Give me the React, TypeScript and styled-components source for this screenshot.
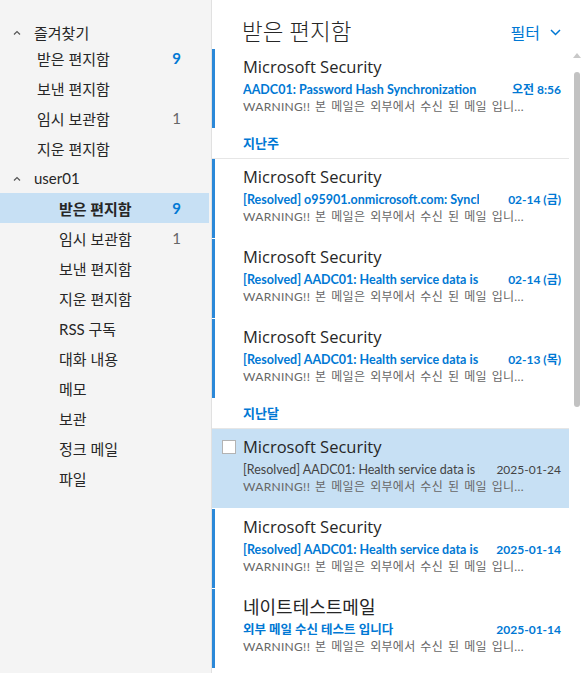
import styled, { createGlobalStyle } from "styled-components";

const GlobalStyle = createGlobalStyle`
    html, body {
        margin: 0;
        padding: 0;
        height: 100%;
        overflow: hidden;
        background: #ffffff;
    }
    body {
        font-family: "Open Sans", "Noto Sans CJK KR", sans-serif;
        color: #333333;
    }
    * { box-sizing: border-box; }
`;

const BLUE = "#0078d4";
const SMALL_FONT = `"Lato", "Noto Sans CJK KR", sans-serif`;
const hasHangul = (s: string) => /[가-힣]/.test(s);

type Folder = { label: string; count?: number; unread?: boolean; level: 0 | 1 | 2; selected?: boolean };

const folders: Folder[] = [
    { label: "즐겨찾기", level: 0 },
    { label: "받은 편지함", level: 1, count: 9, unread: true },
    { label: "보낸 편지함", level: 1 },
    { label: "임시 보관함", level: 1, count: 1 },
    { label: "지운 편지함", level: 1 },
    { label: "user01", level: 0 },
    { label: "받은 편지함", level: 2, count: 9, unread: true, selected: true },
    { label: "임시 보관함", level: 2, count: 1 },
    { label: "보낸 편지함", level: 2 },
    { label: "지운 편지함", level: 2 },
    { label: "RSS 구독", level: 2 },
    { label: "대화 내용", level: 2 },
    { label: "메모", level: 2 },
    { label: "보관", level: 2 },
    { label: "정크 메일", level: 2 },
    { label: "파일", level: 2 },
];

type Message = { from: string; subject: string; date: string; unread?: boolean; selected?: boolean };
type Group = { title?: string; items: Message[] };

const preview = "WARNING!! 본 메일은 외부에서 수신 된 메일 입니...";

const groups: Group[] = [
    { items: [{ from: "Microsoft Security", subject: "AADC01: Password Hash Synchronization", date: "오전 8:56", unread: true }] },
    {
        title: "지난주",
        items: [
            { from: "Microsoft Security", subject: "[Resolved] o95901.onmicrosoft.com: Synchronization", date: "02-14 (금)", unread: true },
            { from: "Microsoft Security", subject: "[Resolved] AADC01: Health service data is not up to date", date: "02-14 (금)", unread: true },
            { from: "Microsoft Security", subject: "[Resolved] AADC01: Health service data is not up to date", date: "02-13 (목)", unread: true },
        ],
    },
    {
        title: "지난달",
        items: [
            { from: "Microsoft Security", subject: "[Resolved] AADC01: Health service data is not up to date", date: "2025-01-24", selected: true },
            { from: "Microsoft Security", subject: "[Resolved] AADC01: Health service data is not up to date", date: "2025-01-14", unread: true },
            { from: "네이트테스트메일", subject: "외부 메일 수신 테스트 입니다", date: "2025-01-14", unread: true },
        ],
    },
];

const Shell = styled.div`
    display: flex;
    height: 100vh;
    overflow: hidden;
`;

const Sidebar = styled.nav`
    width: 212px;
    flex-shrink: 0;
    background: #f4f4f4;
    border-right: 1px solid #e1e1e1;
    padding-top: 21px;
    font-family: ${SMALL_FONT};
`;

const NavRow = styled.div<{ $level: number; $selected?: boolean; $first?: boolean }>`
    display: flex;
    align-items: center;
    height: ${({ $first }) => ($first ? 22 : 30)}px;
    margin-right: 2px;
    padding-left: ${({ $level }) => ($level === 0 ? 13 : $level === 1 ? 37 : 59)}px;
    padding-right: 28px;
    font-size: 15px;
    color: #262626;
    font-weight: ${({ $selected }) => ($selected ? 700 : 400)};
    background: ${({ $selected }) => ($selected ? "#c7e0f4" : "transparent")};
`;

const Caret = styled.svg`
    width: 8px;
    height: 5px;
    margin-right: 13px;
    flex-shrink: 0;
`;

const Count = styled.span<{ $unread?: boolean }>`
    margin-left: auto;
    font-size: 15px;
    font-weight: ${({ $unread }) => ($unread ? 700 : 400)};
    color: ${({ $unread }) => ($unread ? BLUE : "#666666")};
`;

const Main = styled.main`
    flex: 1;
    display: flex;
    flex-direction: column;
    min-width: 0;
`;

const ListHeader = styled.header`
    height: 49px;
    flex-shrink: 0;
    display: flex;
    align-items: center;
    justify-content: space-between;
    padding: 11px 22px 0 30px;
`;

const Title = styled.h1`
    margin: 0;
    font-size: 22.5px;
    font-weight: 300;
    color: #262626;
`;

const FilterButton = styled.button`
    display: flex;
    align-items: center;
    gap: 10px;
    border: none;
    background: none;
    padding: 0;
    margin-top: 4px;
    font-family: inherit;
    font-size: 16px;
    color: ${BLUE};
`;

const ListBody = styled.div`
    flex: 1;
    display: flex;
    min-height: 0;
`;

const ListColumn = styled.div`
    width: 357px;
    flex-shrink: 0;
`;

const GroupHeader = styled.div`
    height: 30px;
    line-height: 29px;
    padding-left: 31px;
    border-bottom: 1px solid #e6e6e6;
    font-size: 13px;
    font-weight: 700;
    color: ${BLUE};
`;

const Item = styled.div<{ $unread?: boolean; $selected?: boolean }>`
    display: flex;
    height: 79px;
    margin-bottom: 1px;
    border-left: 3px solid ${({ $unread }) => ($unread ? "#2b88d8" : "transparent")};
    background: ${({ $selected }) => ($selected ? "#c7e0f4" : "transparent")};
`;

const Gutter = styled.div`
    width: 28px;
    flex-shrink: 0;
    padding: 11px 0 0 7px;
`;

const CheckBox = styled.div`
    width: 14px;
    height: 14px;
    background: #ffffff;
    border: 1px solid #b3b3b3;
`;

const ItemBody = styled.div`
    flex: 1;
    min-width: 0;
    padding: 7px 8px 0 0;
`;

const Sender = styled.div<{ $cjk?: boolean }>`
    font-size: ${({ $cjk }) => ($cjk ? 18 : 16.5)}px;
    line-height: 22px;
    color: #262626;
    white-space: nowrap;
`;

const SubjectRow = styled.div<{ $unread?: boolean }>`
    display: flex;
    align-items: baseline;
    margin-top: 3px;
    font-family: ${SMALL_FONT};
    font-size: 12px;
    line-height: 17px;
    font-weight: ${({ $unread }) => ($unread ? 700 : 400)};
    color: ${({ $unread }) => ($unread ? BLUE : "#444444")};
`;

const Subject = styled.span`
    width: 236px;
    font-size: 12.5px;
    overflow: hidden;
    white-space: nowrap;
`;

const DateText = styled.span`
    margin-left: auto;
    white-space: nowrap;
`;

const Preview = styled.div`
    font-family: ${SMALL_FONT};
    font-size: 12px;
    line-height: 17px;
    word-spacing: 1.5px;
    letter-spacing: 0.3px;
    color: #666666;
    white-space: nowrap;
`;

const ScrollTrack = styled.div`
    width: 14px;
    display: flex;
    flex-direction: column;
    align-items: center;
    padding-top: 4px;
`;

const ScrollArrow = styled.svg`
    width: 8px;
    height: 5px;
    margin-left: 1px;
`;

const ScrollThumb = styled.div`
    width: 6px;
    height: 335px;
    margin-top: 14px;
    margin-left: 1px;
    border-radius: 3px;
    background: #c2c2c2;
`;

const App = () => (
    <>
        <GlobalStyle />
        <Shell>
            <Sidebar>
                {folders.map((f, i) => (
                    <NavRow key={i} $level={f.level} $selected={f.selected} $first={i === 0}>
                        {f.level === 0 && (
                            <Caret viewBox="0 0 8 5">
                                <polyline points="1,4.5 4,1.5 7,4.5" fill="none" stroke="#555" strokeWidth="1.2" />
                            </Caret>
                        )}
                        <span>{f.label}</span>
                        {f.count !== undefined && <Count $unread={f.unread}>{f.count}</Count>}
                    </NavRow>
                ))}
            </Sidebar>
            <Main>
                <ListHeader>
                    <Title>받은 편지함</Title>
                    <FilterButton>
                        필터
                        <svg width="11" height="7" viewBox="0 0 11 7">
                            <polyline points="1,1 5.5,5.5 10,1" fill="none" stroke={BLUE} strokeWidth="1.5" />
                        </svg>
                    </FilterButton>
                </ListHeader>
                <ListBody>
                    <ListColumn>
                        {groups.map((g, gi) => (
                            <div key={gi}>
                                {g.title && <GroupHeader>{g.title}</GroupHeader>}
                                {g.items.map((m, mi) => (
                                    <Item key={mi} $unread={m.unread} $selected={m.selected}>
                                        <Gutter>{m.selected && <CheckBox />}</Gutter>
                                        <ItemBody>
                                            <Sender $cjk={hasHangul(m.from)}>{m.from}</Sender>
                                            <SubjectRow $unread={m.unread}>
                                                <Subject>{m.subject}</Subject>
                                                <DateText>{m.date}</DateText>
                                            </SubjectRow>
                                            <Preview>{preview}</Preview>
                                        </ItemBody>
                                    </Item>
                                ))}
                            </div>
                        ))}
                    </ListColumn>
                    <ScrollTrack>
                        <ScrollArrow viewBox="0 0 8 5">
                            <polygon points="0,5 4,0 8,5" fill="#c8c8c8" />
                        </ScrollArrow>
                        <ScrollThumb />
                    </ScrollTrack>
                </ListBody>
            </Main>
        </Shell>
    </>
);

export default App;
